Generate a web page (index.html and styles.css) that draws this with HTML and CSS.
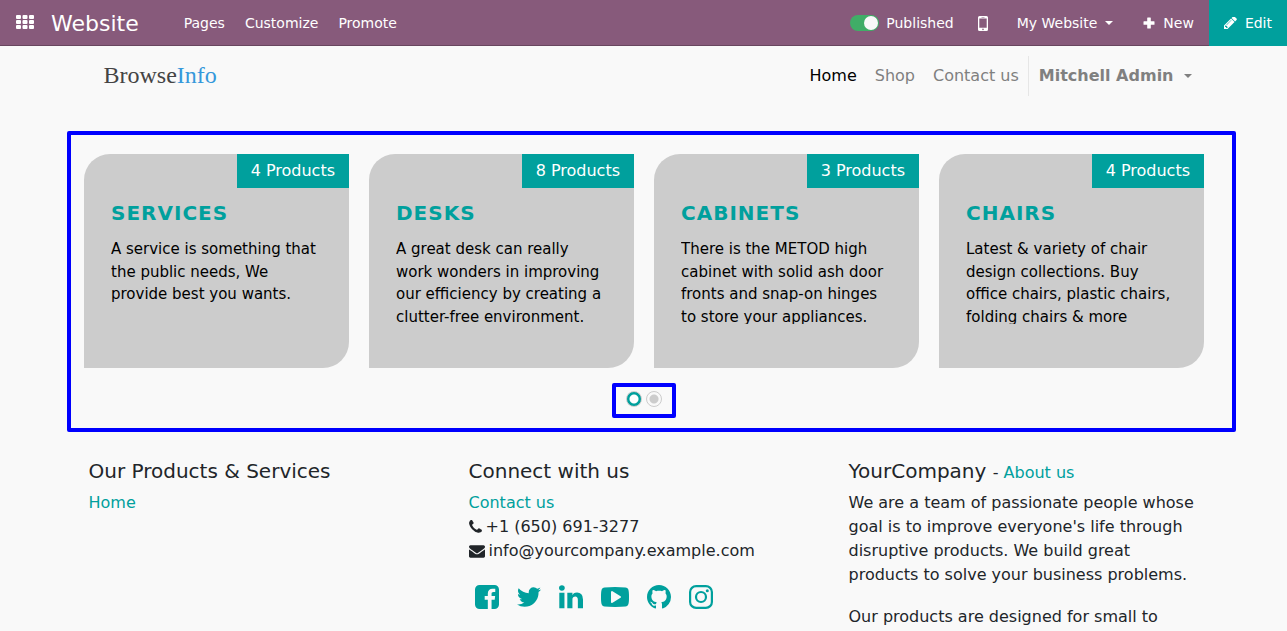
FILE: index.html
```html
<!DOCTYPE html>
<html lang="en">
<head>
<meta charset="utf-8">
<title>Home | My Website</title>
<link rel="stylesheet" href="styles.css">
</head>
<body>
<nav class="topbar">
  <button class="topbar-apps" aria-label="Applications">
    <svg class="icon-apps" viewBox="0 0 18 14" fill="currentColor"><rect width="5" height="4" rx="1"/><rect x="6.500" width="5" height="4" rx="1"/><rect x="13" width="5" height="4" rx="1"/><rect y="5" width="5" height="4" rx="1"/><rect x="6.500" y="5" width="5" height="4" rx="1"/><rect x="13" y="5" width="5" height="4" rx="1"/><rect y="10" width="5" height="4" rx="1"/><rect x="6.500" y="10" width="5" height="4" rx="1"/><rect x="13" y="10" width="5" height="4" rx="1"/></svg>
  </button>
  <a class="topbar-brand" href="#">Website</a>
  <div class="topbar-menu">
    <a href="#">Pages</a>
    <a href="#">Customize</a>
    <a href="#">Promote</a>
  </div>
  <div class="topbar-tools">
    <label class="publish"><input class="switch" type="checkbox" checked>Published</label>
    <button class="tool tool-mobile" aria-label="Mobile preview">
      <svg class="icon-mobile" viewBox="0 0 10 15"><path fill="currentColor" fill-rule="evenodd" d="M1.500 0h7A1.500 1.500 0 0 1 10 1.500v12A1.500 1.500 0 0 1 8.500 15h-7A1.500 1.500 0 0 1 0 13.500v-12A1.500 1.500 0 0 1 1.500 0zM1.300 2.500v9.300h7.400V2.500zM3.500.900v.600h3V.900zM5 12.600a.800.800 0 1 0 0 1.600.800.800 0 0 0 0-1.600z"/></svg>
    </button>
    <button class="tool">My Website<span class="caret"></span></button>
    <button class="tool tool-new"><svg class="icon-plus" viewBox="0 0 12 12"><path fill="currentColor" d="M4.700.500h2.600a.500.500 0 0 1 .500.500v3.200H11a.500.500 0 0 1 .500.500v2.600a.500.500 0 0 1-.500.500H7.800V11a.500.500 0 0 1-.500.500H4.700a.500.500 0 0 1-.500-.500V7.800H1a.500.500 0 0 1-.500-.500V4.700a.500.500 0 0 1 .500-.500h3.200V1a.500.500 0 0 1 .500-.500z"/></svg>New</button>
    <button class="tool tool-edit"><svg class="icon-pencil" viewBox="128 236 1536 1536"><path fill="currentColor" d="M491 1536l91-91-235-235-91 91v107h128v128h107zm523-928q0-22-22-22-10 0-17 7l-542 542q-7 7-7 17 0 22 22 22 10 0 17-7l542-542q7-7 7-17zm-54-192l416 416-832 832h-416v-416zm683 96q0 53-37 90l-166 166-416-416 166-165q36-38 90-38 53 0 91 38l235 234q37 39 37 91z"/></svg>Edit</button>
  </div>
</nav>

<header class="site-header">
  <a class="logo" href="#">Browse<span class="logo-accent">Info</span></a>
  <nav class="site-nav">
    <a class="active" href="#">Home</a>
    <a href="#">Shop</a>
    <a href="#">Contact us</a>
    <button class="user-menu">Mitchell Admin<span class="caret"></span></button>
  </nav>
</header>

<main>
  <section class="slider">
    <div class="cards">
      <article class="card">
        <span class="badge">4 Products</span>
        <h2 class="card-title">SERVICES</h2>
        <p class="card-text">A service is something that the public needs, We provide best you wants.</p>
      </article>
      <article class="card">
        <span class="badge">8 Products</span>
        <h2 class="card-title">DESKS</h2>
        <p class="card-text">A great desk can really work wonders in improving our efficiency by creating a clutter-free environment.</p>
      </article>
      <article class="card">
        <span class="badge">3 Products</span>
        <h2 class="card-title">CABINETS</h2>
        <p class="card-text">There is the METOD high cabinet with solid ash door fronts and snap-on hinges to store your appliances.</p>
      </article>
      <article class="card">
        <span class="badge">4 Products</span>
        <h2 class="card-title">CHAIRS</h2>
        <p class="card-text">Latest &amp; variety of chair design collections. Buy office chairs, plastic chairs, folding chairs &amp; more</p>
      </article>
    </div>
    <div class="dots">
      <button class="dot dot-active" aria-label="Slide 1"></button>
      <button class="dot" aria-label="Slide 2"></button>
    </div>
  </section>
</main>

<footer class="footer">
  <section>
    <h3>Our Products &amp; Services</h3>
    <a href="#">Home</a>
  </section>
  <section>
    <h3>Connect with us</h3>
    <ul class="contact">
      <li><a href="#">Contact us</a></li>
      <li><svg class="icon-phone" viewBox="192 128 1408 1536"><path fill="currentColor" d="M1600 1240q0 27-10 70.500t-21 68.500q-21 50-122 106-94 51-186 51-27 0-53-3.500t-57.500-12.500-47-14.500-55.500-20.500-49-18q-98-35-175-83-127-79-264-216t-216-264q-48-77-83-175-3-9-18-49t-20.500-55.500-14.500-47-12.500-57.500-3.500-53q0-92 51-186 56-101 106-122 25-11 68.500-21t70.500-10q14 0 21 3 18 6 53 76 11 19 30 54t35 63.500 31 53.500q3 4 17.500 25t21.500 35.500 7 28.500q0 20-28.500 50t-62 55-62 53-28.500 46q0 9 5 22.500t8.500 20.500 14 24 11.500 19q76 137 174 235t235 174q2 1 19 11.500t24 14 20.500 8.500 22.500 5q18 0 46-28.500t53-62 55-62 50-28.500q14 0 28.500 7t35.500 21.500 25 17.500q25 15 53.500 31t63.500 35 54 30q70 35 76 53 3 7 3 21z"/></svg>+1 (650) 691-3277</li>
      <li><svg class="icon-mail" viewBox="0 256 1792 1408"><path fill="currentColor" d="M1792 710v794q0 66-47 113t-113 47h-1472q-66 0-113-47t-47-113v-794q44 49 101 87 362 246 497 345 57 42 92.500 65.500t94.500 48 110 24.500h2q51 0 110-24.500t94.500-48 92.500-65.500q170-123 498-345 57-39 100-87zm0-294q0 79-49 151t-122 123q-376 261-468 325-10 7-42.500 31t-54 38.500-52 32.500-57.500 27-50 9h-2q-23 0-50-9t-57.500-27-52-32.500-54-38.500-42.500-31q-91-64-262-182.500t-205-142.500q-62-42-117-115.500t-55-136.500q0-78 41.500-130t118.500-52h1472q65 0 112.500 47t47.500 113z"/></svg>info@yourcompany.example.com</li>
    </ul>
    <div class="social">
      <a href="#" aria-label="Facebook"><svg viewBox="0 128 1536 1536"><path fill="currentColor" d="M1248 128q119 0 203.500 84.500t84.500 203.500v960q0 119-84.500 203.500t-203.500 84.500h-188v-595h199l30-232h-229v-148q0-56 23.500-84t91.500-28l122-1v-207q-63-9-178-9-136 0-217.500 80t-81.500 226v171h-200v232h200v595h-532q-119 0-203.500-84.500t-84.500-203.500v-960q0-119 84.500-203.500t203.500-84.500h960z"/></svg></a>
      <a href="#" aria-label="Twitter"><svg viewBox="108 128 1576 1536"><path fill="currentColor" d="M1684 408q-67 98-162 167 1 14 1 42 0 130-38 259.500t-115.500 248.500-184.500 210.500-258 146-323 54.500q-271 0-496-145 35 4 78 4 225 0 401-138-105-2-188-64.500t-114-159.500q33 5 61 5 43 0 85-11-112-23-185.500-111.500t-73.500-205.500v-4q68 38 146 41-66-44-105-115t-39-154q0-88 44-163 121 149 294.500 238.500t371.500 99.500q-8-38-8-74 0-134 94.500-228.500t228.500-94.500q140 0 236 102 109-21 205-78-37 115-142 178 93-10 186-50z"/></svg></a>
      <a href="#" aria-label="LinkedIn"><svg viewBox="128 128 1536 1536"><path fill="currentColor" d="M477 625v991h-330v-991h330zm21-306q1 73-50.500 122t-135.500 49h-2q-82 0-132-49t-50-122q0-74 51.500-122.500t134.500-48.500 133 48.500 51 122.500zm1166 729v568h-329v-530q0-105-40.500-164.500t-126.500-59.500q-63 0-105.500 34.500t-63.500 85.500q-11 30-11 81v553h-329q2-399 2-647t-1-296l-1-48h329v144h-2q20-32 41-56t56.500-52 87-43.500 114.500-15.500q171 0 275 113.500t104 332.500z"/></svg></a>
      <a href="#" aria-label="YouTube"><svg class="wide" viewBox="0 128 1792 1536"><path fill="currentColor" d="M1280 896q0-37-30-54l-512-320q-31-20-65-2-33 18-33 56v640q0 38 33 56 16 8 31 8 20 0 34-10l512-320q30-17 30-54zm512 0q0 96-1 150t-8.500 136.500-22.500 147.500q-16 73-69 123t-124 58q-222 25-671 25t-671-25q-71-8-124.500-58t-69.500-123q-14-65-21.500-147.500t-8.500-136.500-1-150 1-150 8.500-136.500 22.500-147.500q16-73 69-123t124-58q222-25 671-25t671 25q71 8 124.500 58t69.500 123q14 65 21.500 147.500t8.500 136.500 1 150z"/></svg></a>
      <a href="#" aria-label="GitHub"><svg viewBox="0 0 16 16"><path fill="currentColor" d="M8 0C3.580 0 0 3.580 0 8c0 3.540 2.290 6.530 5.470 7.590.400.070.550-.170.550-.380 0-.190-.010-.820-.010-1.490-2.010.370-2.530-.490-2.690-.940-.090-.230-.480-.940-.820-1.130-.280-.150-.680-.520-.010-.530.630-.010 1.080.580 1.230.820.720 1.210 1.870.870 2.330.660.070-.520.280-.870.510-1.070-1.780-.200-3.640-.890-3.640-3.950 0-.870.310-1.590.820-2.150-.080-.200-.360-1.020.080-2.120 0 0 .670-.210 2.200.820.640-.180 1.320-.270 2-.270s1.360.090 2 .270c1.530-1.040 2.200-.820 2.200-.820.440 1.100.160 1.920.080 2.120.510.560.820 1.270.820 2.150 0 3.070-1.870 3.750-3.650 3.950.290.250.540.730.540 1.480 0 1.070-.010 1.930-.010 2.200 0 .210.150.460.550.380A8.010 8.010 0 0 0 16 8c0-4.420-3.580-8-8-8z"/></svg></a>
      <a href="#" aria-label="Instagram"><svg viewBox="0 0 24 24" fill="none" stroke="currentColor" stroke-width="2.200"><rect x="1.100" y="1.100" width="21.800" height="21.800" rx="6"/><circle cx="12" cy="12" r="5"/><circle cx="18.300" cy="5.700" r="1.500" fill="currentColor" stroke="none"/></svg></a>
    </div>
  </section>
  <section class="about">
    <h3>YourCompany <small>- <a href="#">About us</a></small></h3>
    <p>We are a team of passionate people whose goal is to improve everyone's life through disruptive products. We build great products to solve your business problems.</p>
    <p>Our products are designed for small to</p>
  </section>
</footer>
</body>
</html>
```

FILE: styles.css
```css
* {
  box-sizing: border-box;
}

body {
  margin: 0;
  background: #f9f9f9;
  color: #212529;
  font-family: "DejaVu Sans", Verdana, sans-serif;
  font-size: 16px;
  line-height: 1.5;
}

a {
  color: #00a09d;
  text-decoration: none;
}

button {
  border: 0;
  padding: 0;
  background: none;
  color: inherit;
  font: inherit;
  cursor: pointer;
}

svg {
  display: block;
}

.caret {
  display: inline-block;
  border: 4px solid transparent;
  border-top-color: currentColor;
  border-bottom: 0;
}

/* Editor bar */

.topbar {
  display: flex;
  align-items: stretch;
  height: 46px;
  background: #875a7b;
  box-shadow: inset 0 -1px #68465f;
  color: #fff;
  font-size: 14px;
}

.topbar a {
  color: #fff;
}

.topbar-apps {
  padding: 0 17px 2px 16px;
}

.icon-apps {
  width: 18px;
  height: 14px;
}

.topbar-brand {
  align-self: center;
  margin-right: 35px;
  font-size: 22px;
}

.topbar-menu {
  display: flex;
  align-items: center;
}

.topbar-menu a {
  padding: 0 10px;
}

.topbar-tools {
  display: flex;
  margin-left: auto;
}

.publish {
  display: flex;
  align-items: center;
  gap: 7px;
  margin-right: 10px;
}

.switch {
  appearance: none;
  display: flex;
  justify-content: flex-end;
  width: 29px;
  height: 16px;
  margin: 0;
  padding: 1px;
  border-radius: 8px;
  background: #40ad67;
}

.switch::after {
  content: "";
  width: 14px;
  height: 14px;
  border-radius: 50%;
  background: #f9f9f9;
}

.tool {
  display: flex;
  align-items: center;
  gap: 8px;
  padding: 0 15px;
}

.icon-mobile {
  width: 10px;
  height: 15px;
}

.icon-plus {
  width: 12px;
  height: 12px;
}

.icon-pencil {
  width: 13px;
  height: 13px;
}

.tool-mobile {
  padding: 0 14px;
}

.tool-edit {
  background: #00a09d;
}

/* Site header */

.site-header {
  display: flex;
  align-items: flex-start;
  justify-content: space-between;
  max-width: 1140px;
  margin: 0 auto;
  padding: 10px 15px;
}

.logo {
  margin-left: 15px;
  color: #444;
  font-family: "Liberation Serif", "Times New Roman", serif;
  font-size: 24px;
  line-height: 38px;
}

.logo-accent {
  color: #3598db;
}

.site-nav {
  display: flex;
  align-items: stretch;
}

.site-nav a {
  padding: 8px 9px;
  color: #808080;
}

.site-nav .active {
  color: #000;
}

.user-menu {
  display: flex;
  align-items: center;
  gap: 10px;
  padding: 0 7px 0 10px;
  border-left: 1px solid #e6e6e6;
  color: #808080;
  font-weight: bold;
}

/* Category slider */

.slider {
  margin: 25px 51px 0 67px;
  padding: 19px 28px 10px 13px;
  border: 4px solid #00f;
  border-radius: 2px;
}

.cards {
  display: grid;
  grid-template-columns: repeat(4, 1fr);
  gap: 20px;
}

.card {
  display: flex;
  flex-direction: column;
  min-height: 214px;
  border-radius: 26px 0 26px 0;
  background: #ccc;
}

.badge {
  align-self: flex-end;
  padding: 5px 14px;
  background: #00a09d;
  color: #fff;
}

.card-title {
  margin: 10px 27px;
  color: #00a09d;
  font-size: 20px;
  line-height: 30px;
  letter-spacing: 1px;
}

.card-text {
  max-height: 86px;
  margin: 0 27px;
  overflow: hidden;
  color: #000;
  font-size: 15px;
}

.dots {
  display: flex;
  justify-content: center;
  gap: 4px;
  width: 64px;
  height: 35px;
  margin: 15px auto 0;
  padding: 4px;
  border: 4px solid #00f;
  border-radius: 2px;
}

.dot {
  width: 16px;
  height: 16px;
  border: 1px solid #ccc;
  border-radius: 50%;
  background: radial-gradient(circle, #ccc 4px, #f9f9f9 5px) border-box;
}

.dot-active {
  background: radial-gradient(circle, #fff 4px, #00a09d 5px) border-box;
}

/* Footer */

.footer {
  display: grid;
  grid-template-columns: repeat(3, 1fr);
  gap: 30px;
  max-width: 1140px;
  margin: 0 auto;
  padding: 24px 15px 0;
}

.footer h3 {
  margin: 0 0 5px;
  font-size: 20px;
  font-weight: normal;
  line-height: 30px;
}

.footer small {
  font-size: 16px;
  line-height: 1;
}

.contact {
  margin: 0;
  padding: 0;
  list-style: none;
}

.contact li {
  display: flex;
  align-items: center;
  gap: 4px;
}

.icon-phone {
  width: 13px;
  height: 14px;
}

.icon-mail {
  width: 16px;
  height: 13px;
}

.social {
  display: flex;
  gap: 18px;
  margin: 22px 6px 0;
}

.social svg {
  width: 24px;
  height: 24px;
}

.social .wide {
  width: 28px;
}

.about p {
  margin: 0 0 18px;
}
```
